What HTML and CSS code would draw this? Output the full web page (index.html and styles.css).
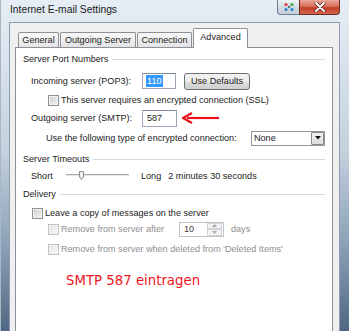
FILE: index.html
```html
<!DOCTYPE html>
<html lang="en">
<head>
    <meta charset="UTF-8">
    <title>Internet E-mail Settings</title>
    <link rel="stylesheet" href="styles.css">
</head>
<body>
<div class="window">
    <div class="titlebar">
        <span class="title">Internet E-mail Settings</span>
        <div class="caption">
            <span class="cap help">
                <svg width="12" height="10" viewBox="0 0 12 10">
                    <circle cx="3" cy="2.5" r="1.6" fill="#e0393e"/>
                    <circle cx="9" cy="2.5" r="1.6" fill="#3fae49"/>
                    <circle cx="6" cy="5" r="1.3" fill="#5c6f86"/>
                    <circle cx="3" cy="7.5" r="1.6" fill="#2f7fd8"/>
                    <circle cx="9" cy="7.5" r="1.6" fill="#2f7fd8"/>
                </svg>
            </span>
            <span class="cap close">
                <svg width="12" height="10" viewBox="0 0 12 10">
                    <path d="M2 1 L10 9 M10 1 L2 9" stroke="#5b1a12" stroke-width="3.4" stroke-linecap="round"/>
                    <path d="M2 1 L10 9 M10 1 L2 9" stroke="#ffffff" stroke-width="2" stroke-linecap="round"/>
                </svg>
            </span>
        </div>
    </div>
    <div class="client">
        <div class="tabs">
            <span class="tab t-general">General</span>
            <span class="tab t-outgoing">Outgoing Server</span>
            <span class="tab t-connection">Connection</span>
            <span class="tab t-advanced active">Advanced</span>
        </div>
        <div class="page">
            <div class="group g-ports"><span>Server Port Numbers</span></div>
            <div class="row r-incoming">
                <span class="lbl">Incoming server (POP3):</span>
                <span class="textbox port"><span class="sel">110</span></span>
                <span class="button">Use Defaults</span>
            </div>
            <div class="row r-ssl">
                <span class="check"></span>
                <span class="ctext">This server requires an encrypted connection (SSL)</span>
            </div>
            <div class="row r-outgoing">
                <span class="lbl">Outgoing server (SMTP):</span>
                <span class="textbox port smtp">587</span>
                <svg class="arrow" width="40" height="12" viewBox="0 0 40 12">
                    <path d="M38 6 L6 6" stroke="#e8131b" stroke-width="2.2"/>
                    <path d="M11 1 L2 6 L11 11" fill="none" stroke="#e8131b" stroke-width="2.2" stroke-linejoin="round"/>
                </svg>
            </div>
            <div class="row r-encrypt">
                <span>Use the following type of encrypted connection:</span>
                <span class="combo">
                    <span class="combo-text">None</span>
                    <span class="combo-btn">
                        <svg width="6" height="4" viewBox="0 0 6 4"><path d="M0 0 L6 0 L3 3.5 Z" fill="#111"/></svg>
                    </span>
                </span>
            </div>
            <div class="group g-timeouts"><span>Server Timeouts</span></div>
            <div class="row r-short">
                <span class="short">Short</span>
                <svg class="slider" width="63" height="10" viewBox="0 0 63 10">
                    <rect x="0" y="3" width="63" height="1" fill="#a7a9ad"/>
                    <rect x="0" y="4" width="63" height="1" fill="#e7e8ea"/>
                    <path d="M13.5 0.5 H17.5 V6 L15.5 8.5 L13.5 6 Z" fill="#f3f3f3" stroke="#8a8d93"/>
                </svg>
                <span class="long">Long</span>
                <span class="dur">2 minutes 30 seconds</span>
            </div>
            <div class="group g-delivery"><span>Delivery</span></div>
            <div class="row r-leave">
                <span class="check"></span>
                <span class="ctext">Leave a copy of messages on the server</span>
            </div>
            <div class="row r-after disabled">
                <span class="check"></span>
                <span class="ctext after-text">Remove from server after</span>
                <span class="spin">
                    <span class="spin-text">10</span>
                    <span class="spin-btns">
                        <span class="spin-up"><svg width="5" height="3" viewBox="0 0 5 3"><path d="M0 3 L5 3 L2.5 0 Z" fill="#a6a9ae"/></svg></span>
                        <span class="spin-down"><svg width="5" height="3" viewBox="0 0 5 3"><path d="M0 0 L5 0 L2.5 3 Z" fill="#a6a9ae"/></svg></span>
                    </span>
                </span>
                <span class="days">days</span>
            </div>
            <div class="row r-deleted disabled">
                <span class="check"></span>
                <span class="ctext">Remove from server when deleted from 'Deleted Items'</span>
            </div>
            <div class="note">SMTP 587 eintragen</div>
        </div>
    </div>
</div>
</body>
</html>
```

FILE: styles.css
```css
*{margin:0;padding:0;box-sizing:border-box;}
html,body{width:349px;height:331px;overflow:hidden;background:#fff;}
body{font-family:"Liberation Sans",Arial,sans-serif;font-size:9.1px;color:#1b1b1b;}

.window{
    width:349px;
    height:331px;
    background:linear-gradient(to bottom,#e6edf4 0,#dae3ec 60px,#c4d1de 150px,#8fa4ba 240px,#4e6782 331px);
    border-left:1px solid #a9b6c4;
}
.titlebar{display:flex;height:22px;}
.title{font-size:10.3px;line-height:20px;padding-left:9px;color:#1a1a1a;}
.caption{display:flex;margin-left:auto;margin-right:9px;}
.cap{display:flex;align-items:center;justify-content:center;height:15px;border:1px solid #6b7f95;border-top:none;}
.cap.help{width:22px;border-radius:0 0 0 4px;background:linear-gradient(#eef2f6,#d4dde6 50%,#c3ced9);border-right:none;}
.cap.close{width:41px;border-color:#6e2d24;border-radius:0 0 4px 0;background:linear-gradient(#e9a798,#d8705c 45%,#c3412a 55%,#d2644c);}

.client{
    height:309px;
    margin:0 9px 0 8px;
    border:1px solid #8e9cad;
    border-bottom:none;
    background:#f0f0f0;
    padding:5px 6px 0 5px;
}
.tabs{display:flex;align-items:flex-end;height:19px;padding-left:3px;}
.tab{
    height:15px;
    margin-right:1px;
    border:1px solid #8e9097;
    border-bottom:none;
    border-radius:2px 2px 0 0;
    background:linear-gradient(#f8f8f8,#e4e4e4);
    text-align:center;
    line-height:14px;
}
.t-general{width:41px;}
.t-outgoing{width:76px;}
.t-connection{width:55px;}
.t-advanced{width:55px;}
.tab.active{
    height:20px;
    margin-bottom:-1px;
    position:relative;
    background:#fff;
    line-height:16px;
}
.page{
    height:290px;
    background:#fff;
    border:1px solid #8e9097;
    border-bottom:none;
    padding:0 7px;
}

.group{display:flex;align-items:center;height:22px;}
.group::after{content:"";flex:1;height:1px;margin-left:4px;background:#d6dbe0;}
.g-delivery{height:24px;}

.row{display:flex;align-items:center;}
.r-incoming{height:22px;padding-left:8px;}
.r-ssl{height:16px;padding-left:25px;}
.r-outgoing{height:20px;padding-left:8px;}
.r-encrypt{height:20px;padding-left:23px;}
.r-short{height:12px;padding-left:8px;}
.r-leave{height:14px;padding-left:9px;}
.r-after{height:18px;padding-left:25px;}
.r-deleted{height:22px;padding-left:25px;}

.lbl{width:111px;}
.textbox{
    display:flex;
    align-items:center;
    height:16px;
    border:1px solid #9ba7b6;
    border-top-color:#7f8b9b;
    background:#fff;
    padding-left:3px;
}
.port{width:34px;}
.smtp{width:35px;height:17px;padding-left:4px;}
.sel{background:#3399ff;color:#fff;line-height:12px;padding:0 1px;}
.button{
    width:66px;
    height:17px;
    margin-left:8px;
    border:1px solid #707070;
    border-radius:3px;
    background:linear-gradient(#f2f2f2,#ebebeb 50%,#dddddd 51%,#cfcfcf);
    text-align:center;
    line-height:15px;
}
.arrow{margin-left:4px;}

.check{
    width:11px;
    height:11px;
    border:1px solid #8e8f8f;
    background:linear-gradient(135deg,#c9ccd1,#f3f3f3);
    box-shadow:inset 0 0 0 1px #f4f4f4;
}
.ctext{margin-left:2px;}
.disabled{color:#8f8f8f;}
.disabled .check{border-color:#c2c2c2;background:linear-gradient(135deg,#e4e4e4,#f8f8f8);}

.combo{
    display:flex;
    align-items:center;
    width:74px;
    height:15px;
    margin-left:auto;
    border:1px solid #8f969e;
    background:#fff;
}
.combo-text{flex:1;padding-left:2px;}
.combo-btn{
    display:flex;
    align-items:center;
    justify-content:center;
    width:13px;
    height:13px;
    border:1px solid #8a8a8a;
    border-radius:1px;
    background:linear-gradient(#f3f3f3,#dcdcdc);
}

.short{width:35px;}
.long{margin-left:12px;}
.dur{margin-left:7px;}

.after-text{width:118px;}
.spin{
    display:flex;
    align-items:center;
    width:45px;
    height:15px;
    border:1px solid #bfc4ca;
    background:#fff;
    color:#3c3c3c;
}
.spin-text{flex:1;padding-left:4px;}
.spin-btns{display:flex;flex-direction:column;width:15px;height:13px;margin-right:1px;}
.spin-up,.spin-down{
    display:flex;
    align-items:center;
    justify-content:center;
    flex:1;
    border:1px solid #d0d3d7;
    background:#f4f4f4;
}
.days{margin-left:7px;}

.note{
    margin-top:10px;
    padding-left:43px;
    height:22px;
    line-height:22px;
    font-family:"DejaVu Sans",Verdana,sans-serif;
    font-size:13.3px;
    color:#f0141c;
}
```
